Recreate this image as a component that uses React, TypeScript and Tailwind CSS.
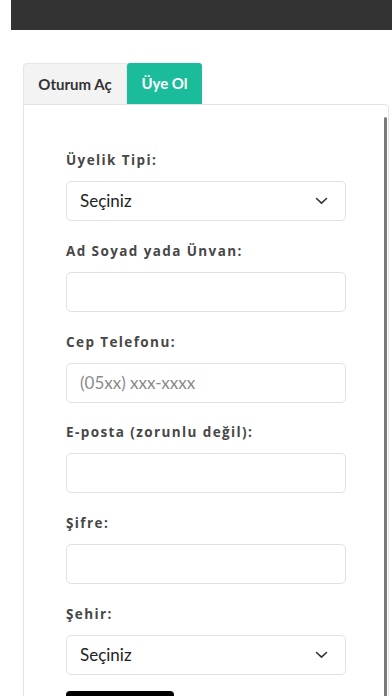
import React from "react";

const labelCls =
  "block h-[20px] leading-[20px] text-[13.5px] font-bold tracking-[1.4px] text-[#474747] mb-[11px]";
const labelFont = { fontFamily: '"Open Sans", "DejaVu Sans", sans-serif' };

function Chevron() {
  return (
    <svg width="13" height="8" viewBox="0 0 13 8" fill="none" className="shrink-0">
      <path d="M1.5 1.5L6.5 6.2L11.5 1.5" stroke="#333" strokeWidth="1.6" strokeLinecap="round" strokeLinejoin="round" />
    </svg>
  );
}

function Select() {
  return (
    <div className="flex items-center justify-between h-[40px] rounded-[5px] border border-[#dfe2e6] bg-white pl-[13px] pr-[17px] mb-[19.8px]">
      <span className="text-[17px] text-[#222]">Seçiniz</span>
      <Chevron />
    </div>
  );
}

function Input({ placeholder }: { placeholder?: string }) {
  return (
    <div className="flex items-center h-[40px] rounded-[5px] border border-[#dfe2e6] bg-white pl-[13px] mb-[19.8px]">
      {placeholder && <span className="text-[17px] text-[#8a8a8a]">{placeholder}</span>}
    </div>
  );
}

function Field({ label, children }: { label: string; children: React.ReactNode }) {
  return (
    <div>
      <div className={labelCls} style={labelFont}>
        {label}
      </div>
      {children}
    </div>
  );
}

export default function App() {
  return (
    <div
      className="w-[392px] h-[696px] overflow-hidden bg-white pl-[11px]"
      style={{ fontFamily: 'Lato, "Liberation Sans", sans-serif' }}
    >
      <div className="h-[30px] bg-[#333333]" />
      <div className="pl-[12px] pr-[3px] pt-[33px]">
        <div className="flex h-[41px]">
          <div className="flex items-center justify-center w-[104px] bg-[#f3f3f3] border border-[#e6e6e6] border-b-0 rounded-tl-[4px] text-[15px] font-bold text-[#333]">
            Oturum Aç
          </div>
          <div className="flex items-center justify-center w-[75px] bg-[#1abc9c] rounded-t-[3px] text-[15px] font-bold text-white">
            Üye Ol
          </div>
        </div>
        <div className="relative border border-[#e3e3e3] rounded-b-[4px] rounded-tr-[4px] pt-[45px] px-[42px] h-[700px]">
          <div className="absolute right-[1px] top-[12px] w-[3px] h-[700px] bg-[#7a7a7a] rounded-full" />
          <Field label="Üyelik Tipi:">
            <Select />
          </Field>
          <Field label="Ad Soyad yada Ünvan:">
            <Input />
          </Field>
          <Field label="Cep Telefonu:">
            <Input placeholder="(05xx) xxx-xxxx" />
          </Field>
          <Field label="E-posta (zorunlu değil):">
            <Input />
          </Field>
          <Field label="Şifre:">
            <Input />
          </Field>
          <Field label="Şehir:">
            <Select />
          </Field>
          <div className="w-[108px] h-[40px] bg-black rounded-[4px] -mt-[4px]" />
        </div>
      </div>
    </div>
  );
}
